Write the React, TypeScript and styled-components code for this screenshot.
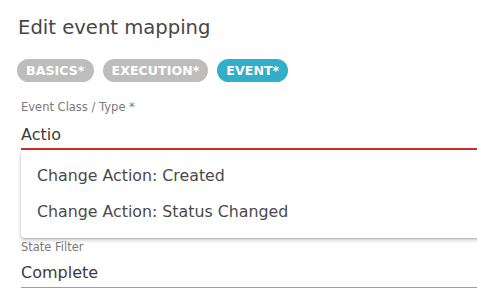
import React from 'react';
import styled, { createGlobalStyle } from 'styled-components';

const GlobalStyle = createGlobalStyle`
  html, body {
    margin: 0;
    padding: 0;
    background: #ffffff;
  }
  body {
    font-family: 'DejaVu Sans', 'Open Sans', sans-serif;
    color: #333333;
    overflow: hidden;
  }
`;

/**
 * Page wrapper.
 */
const Page = styled.div`
  width: 477px;
  height: 303px;
  padding: 15px 0 0 18px;
  box-sizing: border-box;
  overflow: hidden;
`;

/**
 * Dialog title.
 */
const Title = styled.h2`
  margin: 0;
  font-size: 19.6px;
  line-height: 26px;
  font-weight: 400;
  color: #474747;
`;

/**
 * Row of step chips.
 */
const ChipRow = styled.div`
  display: flex;
  gap: 9px;
  margin-top: 18px;
  margin-left: -1px;
`;

/**
 * Step chip.
 */
const Chip = styled.span<{ $active?: boolean }>`
  display: inline-flex;
  align-items: center;
  height: 23px;
  padding: 0 9px;
  border-radius: 12px;
  background: ${({ $active }) => ($active ? '#33aec8' : '#bdbdbd')};
  color: #ffffff;
  font-size: 12.5px;
  font-weight: 700;
  letter-spacing: 0.1px;
`;

/**
 * Form field.
 */
const Field = styled.div<{ $top: number }>`
  position: relative;
  margin-top: ${({ $top }) => $top}px;
  margin-left: 3px;
`;

const Label = styled.div`
  font-size: 11.5px;
  line-height: 14px;
  color: #7a7a7a;
`;

const Value = styled.div<{ $error?: boolean }>`
  margin-top: ${({ $error }) => ($error ? 10 : 8)}px;
  padding-bottom: ${({ $error }) => ($error ? 2 : 3)}px;
  font-size: 16px;
  line-height: 22px;
  color: #3c3c3c;
  border-bottom: ${({ $error }) => ($error ? '2px solid #d32f2f' : '1px solid #9e9e9e')};
  margin-right: -20px;
`;

/**
 * Autocomplete dropdown.
 */
const Menu = styled.ul`
  position: absolute;
  left: 0;
  right: -40px;
  top: 100%;
  margin: 0;
  padding: 7px 0 9px;
  list-style: none;
  background: #ffffff;
  border-radius: 4px;
  box-shadow: 0 2px 4px rgba(0, 0, 0, 0.22), 0 1px 2px rgba(0, 0, 0, 0.12);
  z-index: 2;
`;

const MenuItem = styled.li`
  padding: 0 16px;
  height: 36px;
  display: flex;
  align-items: center;
  font-size: 15.8px;
  color: #4a4a4a;
`;

const App: React.FC = () => {
  return (
    <Page>
      <GlobalStyle />
      <Title>Edit event mapping</Title>
      <ChipRow>
        <Chip>BASICS*</Chip>
        <Chip>EXECUTION*</Chip>
        <Chip $active>EVENT*</Chip>
      </ChipRow>
      <Field $top={18}>
        <Label>Event Class / Type *</Label>
        <Value $error>Actio</Value>
        <Menu>
          <MenuItem>Change Action: Created</MenuItem>
          <MenuItem>Change Action: Status Changed</MenuItem>
        </Menu>
      </Field>
      <Field $top={90}>
        <Label>State Filter</Label>
        <Value>Complete</Value>
      </Field>
    </Page>
  );
};

export default App;
